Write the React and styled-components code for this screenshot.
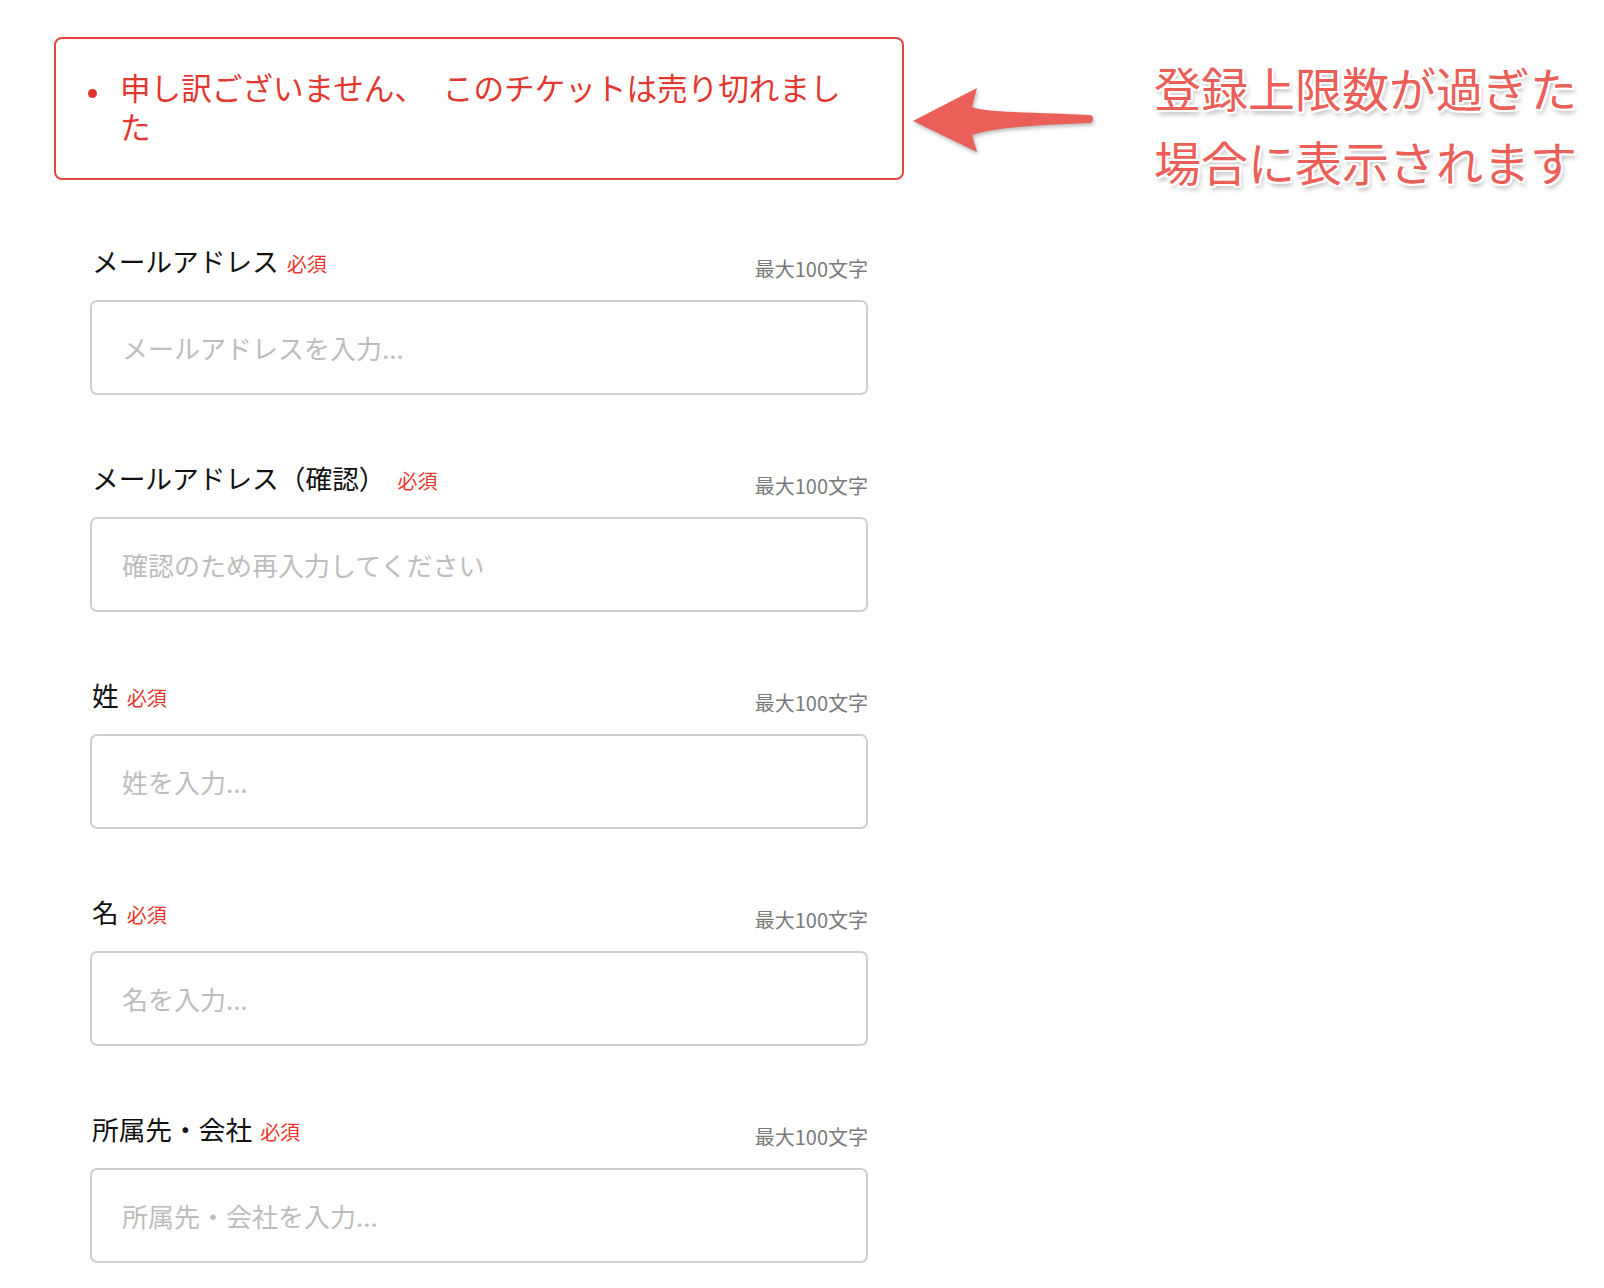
import React from 'react'
import styled, { createGlobalStyle } from 'styled-components'

const GlobalStyle = createGlobalStyle`
    html, body {
        margin: 0;
        padding: 0;
        background: #ffffff;
    }
    body {
        font-family: "Noto Sans CJK JP", "Noto Sans", sans-serif;
        color: #111;
    }
`

const fields = [
    { label: 'メールアドレス', placeholder: 'メールアドレスを入力...', wideGap: false },
    { label: 'メールアドレス（確認）', placeholder: '確認のため再入力してください', wideGap: true },
    { label: '姓', placeholder: '姓を入力...', wideGap: false },
    { label: '名', placeholder: '名を入力...', wideGap: false },
    { label: '所属先・会社', placeholder: '所属先・会社を入力...', wideGap: false },
]

const App = () => {
  return (
    <Page>
        <GlobalStyle />
        <Column>
            <ErrorBox>
                <ErrorItem>
                    <Bullet />
                    <ErrorText>申し訳ございません、 このチケットは売り切れました</ErrorText>
                </ErrorItem>
            </ErrorBox>
            {fields.map((f) => (
                <Field key={f.label}>
                    <LabelRow>
                        <Label>
                            {f.label}
                            <Required $wide={f.wideGap}>必須</Required>
                        </Label>
                        <Hint>最大100文字</Hint>
                    </LabelRow>
                    <Input type="text" placeholder={f.placeholder} />
                </Field>
            ))}
        </Column>

        {/* annotation callout */}
        <Arrow viewBox="0 0 200 80" width="200" height="80">
            <path
                d="M13 41 L77 8 L72 27 C88 33 132 32 189 35 A4 4 0 0 1 189 43 C132 45 92 48 72 55 L77 72 Z"
                fill="#ea5f58"
            />
        </Arrow>
        <Note>
            登録上限数が過ぎた<br />
            場合に表示されます
        </Note>
    </Page>
  )
}

const Page = styled.div`
    position: relative;
    width: 1604px;
    min-height: 1288px;
    box-sizing: border-box;
    padding: 37px 0 0 54px;
`

const Column = styled.div`
    width: 850px;
    display: flex;
    flex-direction: column;
    gap: 65px;
`

const ErrorBox = styled.ul`
    margin: 0 0 -2px;
    box-sizing: border-box;
    height: 143px;
    border: 2px solid #e2473d;
    border-radius: 8px;
    padding: 29px 20px 0 32px;
    list-style: none;
`

const ErrorItem = styled.li`
    display: flex;
    align-items: flex-start;
`

const Bullet = styled.span`
    flex: none;
    width: 9px;
    height: 9px;
    border-radius: 50%;
    background: #e1362d;
    margin: 21px 23px 0 0;
`

const ErrorText = styled.span`
    font-size: 30.6px;
    line-height: 39px;
    word-spacing: 11px;
    color: #e1382f;
    max-width: 738px;
`

const Field = styled.div`
    padding: 0 36px;
    display: flex;
    flex-direction: column;
`

const LabelRow = styled.div`
    display: flex;
    justify-content: space-between;
    align-items: flex-end;
    margin-bottom: 21px;
`

const Label = styled.div`
    font-size: 26.7px;
    line-height: 36px;
    height: 36px;
    color: #111;
    padding-left: 2px;
`

const Required = styled.span`
    font-size: 20px;
    line-height: 20px;
    color: #e8382f;
    margin-left: ${(p) => (p.$wide ? '12px' : '8px')};
`

const Hint = styled.div`
    font-size: 20px;
    line-height: 20px;
    color: #7a7a7a;
`

const Input = styled.input`
    box-sizing: border-box;
    width: 100%;
    height: 95px;
    border: 2px solid #cfcfcf;
    border-radius: 7px;
    padding: 0 30px;
    font-family: "Noto Sans CJK JP", "Noto Sans", sans-serif;
    font-size: 26px;
    color: #111;
    outline: none;
    background: #fff;

    &::placeholder {
        color: #bdbdbd;
    }
`

const Arrow = styled.svg`
    position: absolute;
    left: 900px;
    top: 80px;
    overflow: visible;
    filter: drop-shadow(1px 2px 2px rgba(0, 0, 0, 0.3));
`

const Note = styled.div`
    position: absolute;
    left: 1154px;
    top: 50px;
    font-size: 47px;
    line-height: 74px;
    color: #ea5f58;
    white-space: nowrap;
    text-shadow:
        -2px 0 0 #fff, 2px 0 0 #fff, 0 -2px 0 #fff, 0 2px 0 #fff,
        -2px -2px 0 #fff, 2px 2px 0 #fff, -2px 2px 0 #fff, 2px -2px 0 #fff,
        2px 4px 5px rgba(0, 0, 0, 0.35);
`

export default App
